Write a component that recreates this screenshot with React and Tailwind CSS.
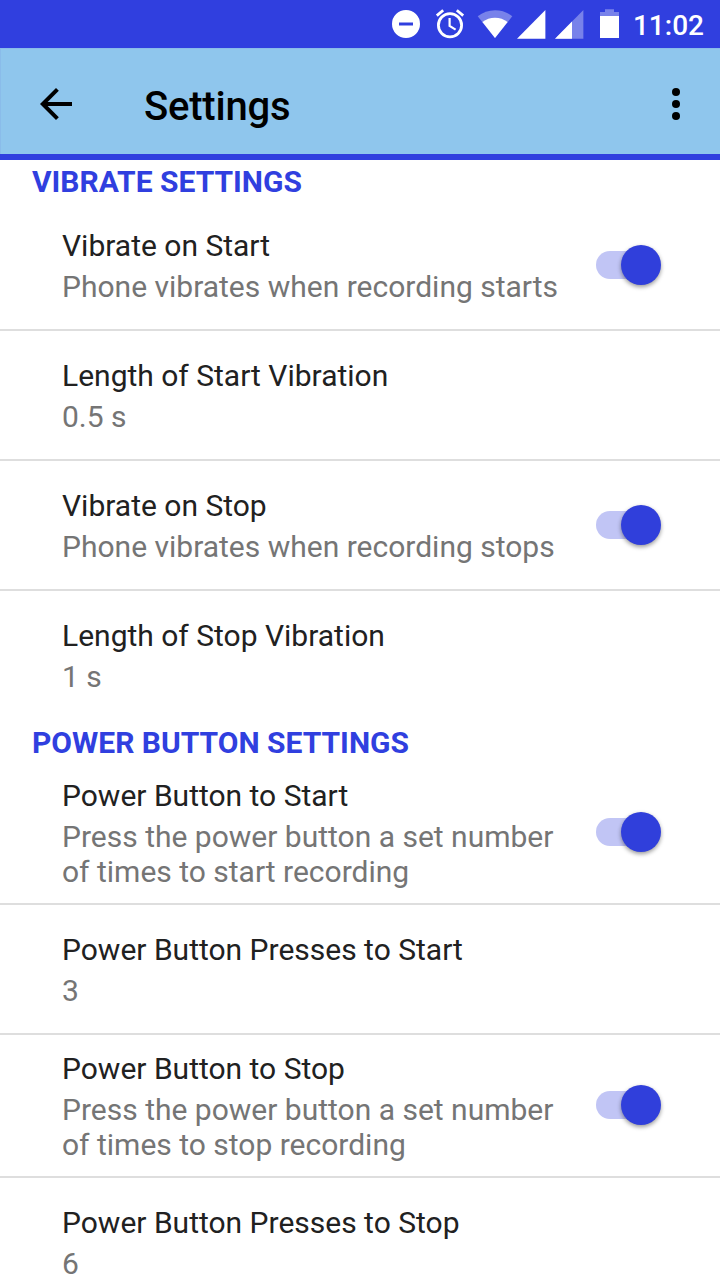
const vibrateItems = [
	{
		title: 'Vibrate on Start',
		summary: ['Phone vibrates when recording starts'],
		toggle: true,
	},
	{
		title: 'Length of Start Vibration',
		summary: ['0.5 s'],
	},
	{
		title: 'Vibrate on Stop',
		summary: ['Phone vibrates when recording stops'],
		toggle: true,
	},
	{
		title: 'Length of Stop Vibration',
		summary: ['1 s'],
	},
];

const powerButtonItems = [
	{
		title: 'Power Button to Start',
		summary: ['Press the power button a set number', 'of times to start recording'],
		toggle: true,
	},
	{
		title: 'Power Button Presses to Start',
		summary: ['3'],
	},
	{
		title: 'Power Button to Stop',
		summary: ['Press the power button a set number', 'of times to stop recording'],
		toggle: true,
	},
	{
		title: 'Power Button Presses to Stop',
		summary: ['6'],
	},
];

function StatusBar() {
	return (
		<div className="flex h-12 shrink-0 items-center justify-end bg-[#303fdf] pr-4 text-white">
			<svg width="230" height="48" viewBox="390 0 230 48" fill="currentColor" className="mr-[13px] shrink-0">
				{/* do not disturb */}
				<path fillRule="evenodd" d="M406 10a14 14 0 1 0 0 28a14 14 0 1 0 0-28zM399 22.5h14v3h-14z" />
				{/* alarm */}
				<g fill="none" stroke="currentColor">
					<circle cx="450" cy="25.3" r="11.6" strokeWidth="2.8" />
					<path d="M449.6 18v8l6 3.6" strokeWidth="2.2" />
					<path d="M436.8 15.6l6.4-5.4M463.2 15.6l-6.4-5.4" strokeWidth="2.8" />
				</g>
				{/* wifi */}
				<path d="M495 38L477.7 16.3a27.5 27.5 0 0 1 34.6 0z" fillOpacity="0.35" />
				<path d="M495 38L482.4 22a20.5 20.5 0 0 1 25.2 0z" />
				{/* signal */}
				<path d="M517 38.7L545.4 10v28.7z" />
				<path d="M555 38.7L583.4 10v28.7z" fillOpacity="0.35" />
				<path d="M555 38.7L572 21.5v17.2z" />
				{/* battery */}
				<path d="M600 16v-4h5V9.300h9V12h5v4z" fillOpacity="0.35" />
				<path d="M600 16h19v22h-19z" />
			</svg>
			<span className="pt-[3px] text-[28px] leading-[33px] font-medium">11:02</span>
		</div>
	);
}

function AppBar() {
	return (
		<header className="flex h-28 shrink-0 items-center border-b-[6px] border-[#303fdf] bg-[#8fc6ed] pt-1.5 pr-5 pl-8 text-black inset-shadow-[1px_1px_0_#8abcea]">
			<svg width="48" height="48" viewBox="0 0 24 24" fill="currentColor">
				<path d="M20 11H7.830l5.590-5.590L12 4l-8 8 8 8 1.410-1.410L7.830 13H20v-2z" />
			</svg>
			<h1 className="grow pt-[5px] pl-16 text-[40px] leading-[47px] font-medium tracking-[-0.2px]">Settings</h1>
			<svg width="48" height="48" viewBox="0 0 24 24" fill="currentColor">
				<circle cx="12" cy="6" r="2" />
				<circle cx="12" cy="12" r="2" />
				<circle cx="12" cy="18" r="2" />
			</svg>
		</header>
	);
}

function Toggle() {
	return (
		<div className="flex h-7 w-[65px] shrink-0 items-center justify-end rounded-full bg-linear-to-r from-[#c1c5f5] from-70% to-transparent to-70%">
			<div className="size-10 shrink-0 rounded-full bg-[#303fdb] shadow-[0_2px_4px_rgba(0,0,0,0.4)]" />
		</div>
	);
}

function SettingRow({ item }) {
	const tall = item.summary.length > 1;

	return (
		<li className="flex items-center border-b-2 border-[#dedede] pr-[59px] pl-[62px] last:border-b-0">
			<div
				className={
					tall
						? 'grow pt-4 pb-3.5 text-[30px] leading-[35px]'
						: 'grow pt-[27px] pb-[25px] text-[30px] leading-[35px]'
				}
			>
				<p className="mb-1.5 text-[#212121]">{item.title}</p>
				{item.summary.map((line) => (
					<p key={line} className="text-[#757575]">{line}</p>
				))}
			</div>
			{item.toggle && (
				<div className={tall ? 'mb-px' : ''}>
					<Toggle />
				</div>
			)}
		</li>
	);
}

export default function App() {
	return (
		<div className="flex h-[1280px] w-[720px] flex-col overflow-hidden bg-white font-[Roboto,sans-serif] whitespace-nowrap">
			<StatusBar />
			<AppBar />
			<main>
				<section>
					<h2 className="px-8 pt-1 pb-0.5 text-[30px] leading-[35px] font-bold text-[#303fdf]">VIBRATE SETTINGS</h2>
					<ul>
						{vibrateItems.map((item) => (
							<SettingRow key={item.title} item={item} />
						))}
					</ul>
				</section>
				<section>
					<h2 className="px-8 pt-1.5 pb-0.5 text-[30px] leading-[35px] font-bold text-[#303fdf]">POWER BUTTON SETTINGS</h2>
					<ul>
						{powerButtonItems.map((item) => (
							<SettingRow key={item.title} item={item} />
						))}
					</ul>
				</section>
			</main>
		</div>
	);
}
